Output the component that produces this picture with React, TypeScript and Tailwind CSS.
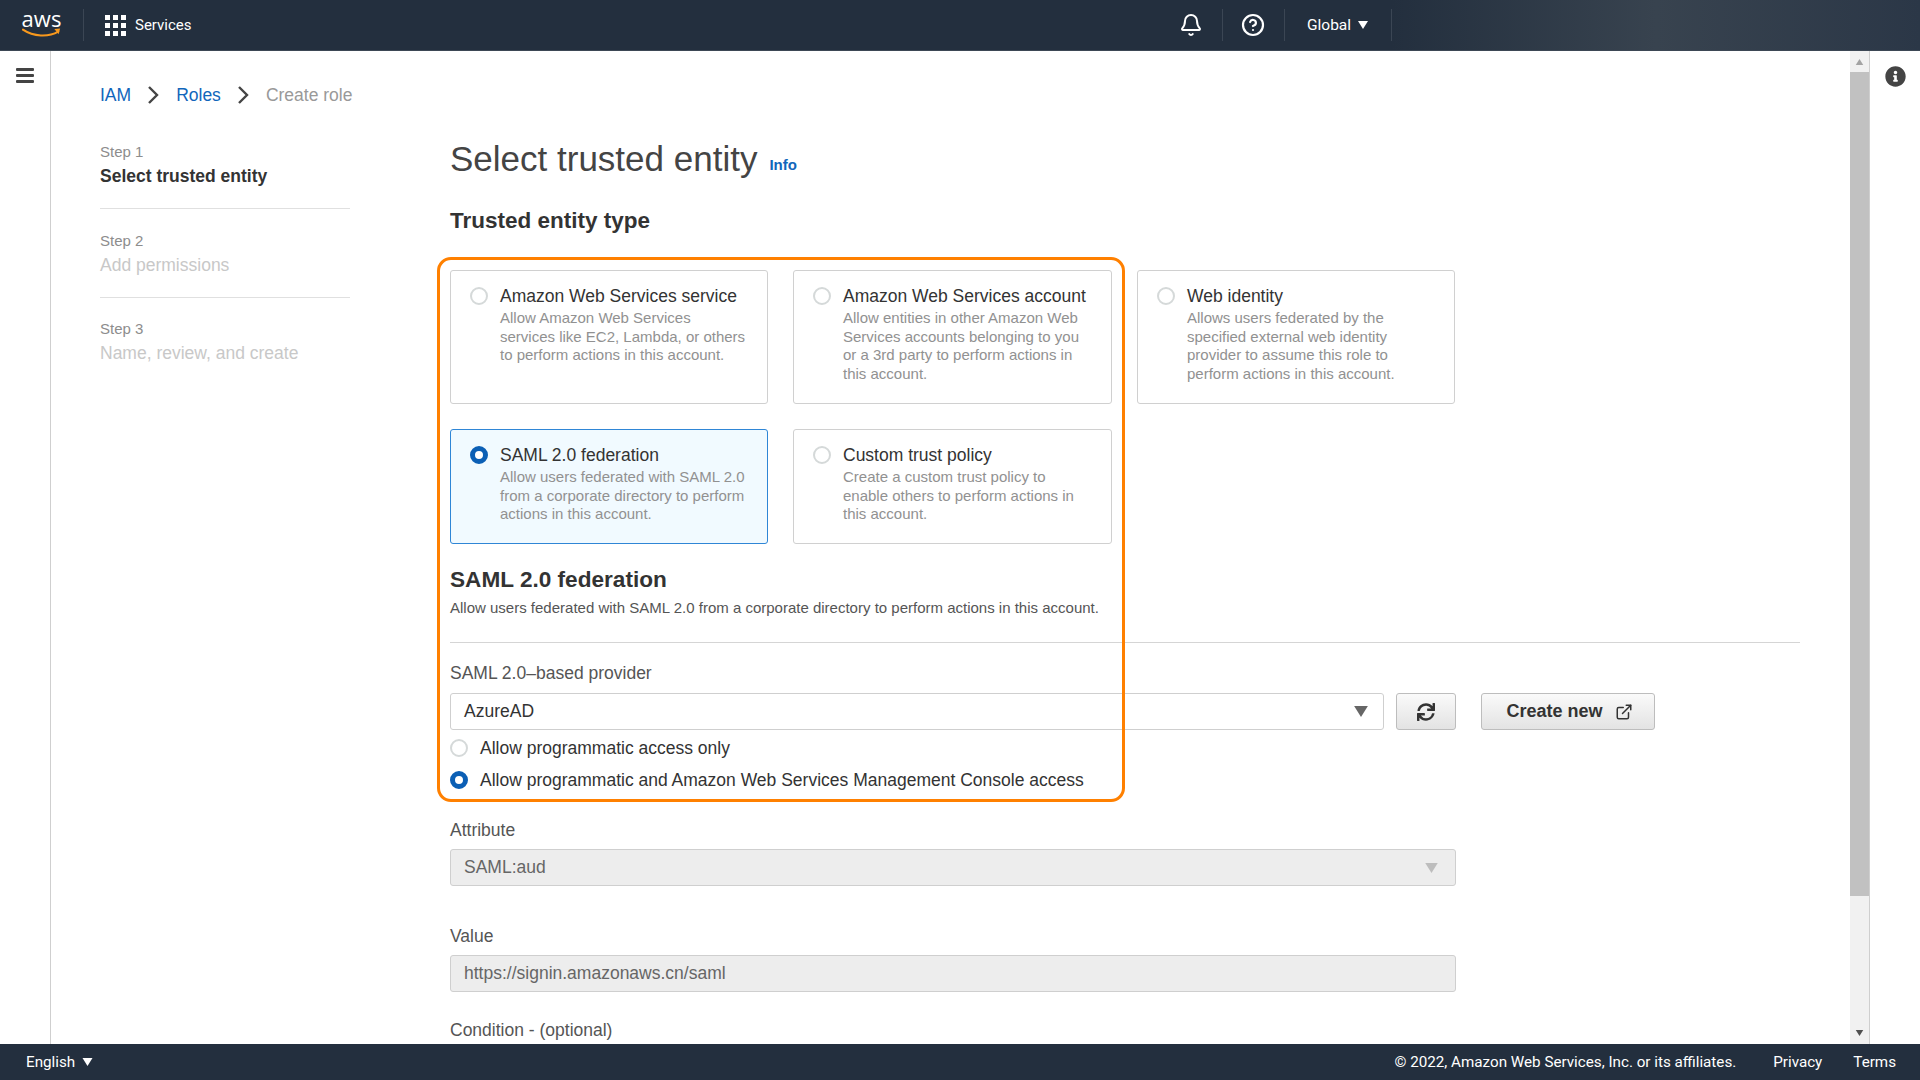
import { Bell, CircleHelp } from 'lucide-react';
import { FaInfoCircle, FaSync } from 'react-icons/fa';
import { FiExternalLink } from 'react-icons/fi';

const arial = 'font-["Liberation_Sans",Arial,sans-serif]';

const Caret = ({ className }: { className: string }) => (
  <svg className={className} viewBox="0 0 10 8" fill="currentColor">
    <path d="M0 0h10L5 8z" />
  </svg>
);

const Crumb = () => (
  <svg className="w-[12px] h-[20px] shrink-0 text-[#444]" viewBox="0 0 12 20" fill="none" stroke="currentColor" strokeWidth="2.4">
    <path d="M2 2l8 8-8 8" />
  </svg>
);

const Radio = ({ checked }: { checked?: boolean }) => (
  <span
    className={
      checked
        ? 'block w-[18px] h-[18px] shrink-0 rounded-full bg-white border-[5px] border-[#0b5fb5]'
        : 'block w-[18px] h-[18px] shrink-0 rounded-full bg-white border-2 border-[#d5d9d9]'
    }
  />
);

const steps = [
  { label: 'Step 1', title: 'Select trusted entity', active: true },
  { label: 'Step 2', title: 'Add permissions', active: false },
  { label: 'Step 3', title: 'Name, review, and create', active: false },
];

const cards = [
  {
    title: 'Amazon Web Services service',
    lines: ['Allow Amazon Web Services', 'services like EC2, Lambda, or others', 'to perform actions in this account.'],
  },
  {
    title: 'Amazon Web Services account',
    lines: ['Allow entities in other Amazon Web', 'Services accounts belonging to you', 'or a 3rd party to perform actions in', 'this account.'],
  },
  {
    title: 'Web identity',
    lines: ['Allows users federated by the', 'specified external web identity', 'provider to assume this role to', 'perform actions in this account.'],
  },
  {
    title: 'SAML 2.0 federation',
    lines: ['Allow users federated with SAML 2.0', 'from a corporate directory to perform', 'actions in this account.'],
    selected: true,
  },
  {
    title: 'Custom trust policy',
    lines: ['Create a custom trust policy to', 'enable others to perform actions in', 'this account.'],
  },
];

const Header = () => (
  <header className="h-[51px] shrink-0 flex items-stretch bg-[#232f3e] border-b border-[#3d4855] font-['Roboto',sans-serif] text-white">
    <div className="w-[83px] shrink-0 flex justify-center">
      <div className="relative w-[40px] h-[50px]">
        <span className="absolute left-0 top-[5px] w-full text-center font-['Open_Sans',sans-serif] text-[22px] leading-[26px]">aws</span>
        <svg className="absolute left-0 top-[27px] w-[40px] h-[12px]" viewBox="0 0 42 12" fill="none">
          <path d="M1 2.5c11 7.5 27 8 37 2" stroke="#f7981d" strokeWidth="2.2" strokeLinecap="round" />
          <path d="M34 1.8l6-.6-1.6 6z" fill="#f7981d" />
        </svg>
      </div>
    </div>
    <div className="w-px my-[9px] bg-[#3b4654]" />
    <div className="ml-[21px] flex items-center">
      <div className="grid grid-cols-3 gap-[3px] w-[21px]">
        {Array.from({ length: 9 }).map((_, i) => (
          <span key={i} className="h-[5px] w-[5px] bg-white" />
        ))}
      </div>
      <span className="ml-[9px] pt-[1px] text-[15px]">Services</span>
    </div>
    <div className="ml-[985px] w-[45px] pr-[16px] flex items-center justify-center">
      <Bell className="w-[24px] h-[24px] shrink-0" strokeWidth={2} />
    </div>
    <div className="w-px my-[9px] bg-[#3b4654]" />
    <div className="w-[61px] flex items-center justify-center">
      <CircleHelp className="w-[24px] h-[24px]" strokeWidth={2.2} />
    </div>
    <div className="w-px my-[9px] bg-[#3b4654]" />
    <div className="w-[106px] flex items-center justify-center gap-[7px]">
      <span className="pt-[1px] text-[15.5px]">Global</span>
      <Caret className="w-[10px] h-[8px]" />
    </div>
    <div className="w-px my-[9px] bg-[#3b4654]" />
    <div className="flex-1 bg-linear-to-r from-[#232f3e] via-[#38434f] to-[#2b3747]" />
  </header>
);

const Footer = () => (
  <footer className="h-[36px] shrink-0 flex items-center bg-[#232f3e] text-white font-['Roboto',sans-serif] text-[15.2px]">
    <span className="ml-[26px]">English</span>
    <Caret className="ml-[7px] w-[11px] h-[8px]" />
    <span className="ml-auto">© 2022, Amazon Web Services, Inc. or its affiliates.</span>
    <span className="ml-[37px]">Privacy</span>
    <span className="ml-[31px] mr-[24px]">Terms</span>
  </footer>
);

const Scrollbar = () => (
  <div className="w-[19px] shrink-0 flex flex-col bg-[#f1f1f1]">
    <div className="h-[21px] shrink-0 flex items-center justify-center">
      <Caret className="w-[9px] h-[6px] rotate-180 text-[#a3a3a3]" />
    </div>
    <div className="h-[824px] shrink-0 bg-[#c1c1c1]" />
    <div className="flex-1 flex items-end justify-center pb-[8px]">
      <Caret className="w-[9px] h-[6px] text-[#505050]" />
    </div>
  </div>
);

const Stepper = () => (
  <nav className="w-[250px] shrink-0 pt-[35px]">
    {steps.map((step, i) => (
      <div key={step.label} className={i === 0 ? 'h-[67px] border-b border-[#e0e0e0] mb-[22px]' : i === 1 ? 'h-[67px] border-b border-[#e0e0e0] mb-[21px]' : ''}>
        <div className="text-[15px] leading-[20px] text-[#8d8d8d]">{step.label}</div>
        <div className={step.active ? 'mt-[2px] text-[17.5px] leading-[24px] font-bold text-[#333]' : 'mt-[2px] text-[17.5px] leading-[24px] text-[#c8c8c8]'}>
          {step.title}
        </div>
      </div>
    ))}
  </nav>
);

const EntityCard = ({ title, lines, selected }: { title: string; lines: string[]; selected?: boolean }) => (
  <div className={selected ? 'flex gap-[12px] px-[19px] pt-[13px] rounded-[3px] border border-[#2f86d6] bg-[#f1faff]' : 'flex gap-[12px] px-[19px] pt-[13px] rounded-[3px] border border-[#d0d0d0] bg-white'}>
    <div className="pt-[3px]">
      <Radio checked={selected} />
    </div>
    <div>
      <div className="mb-[1px] text-[17.5px] leading-[24px] text-[#333] whitespace-nowrap">{title}</div>
      {lines.map(line => (
        <div key={line} className="text-[15px] leading-[18.6px] text-[#919191] whitespace-nowrap">{line}</div>
      ))}
    </div>
  </div>
);

const App = () => {
  return (
    <div className={`h-screen w-full flex flex-col overflow-hidden bg-white ${arial}`}>
      <Header />
      <div className="flex-1 min-h-0 flex">
        <div className="w-[51px] shrink-0 border-r border-[#cfcfcf] pt-[17px] pl-[16px]">
          <svg className="w-[18px] h-[15px] text-[#444]" viewBox="0 0 18 15" fill="currentColor">
            <rect width="18" height="3" rx="1" />
            <rect y="6" width="18" height="3" rx="1" />
            <rect y="12" width="18" height="3" rx="1" />
          </svg>
        </div>
        <div className="relative flex-1 min-w-0 overflow-hidden pl-[49px]">
          <div className="mt-[32px] h-[24px] flex items-center text-[17.5px] text-[#1166bb]">
            <span>IAM</span>
            <span className="ml-[16px] mr-[17px]"><Crumb /></span>
            <span>Roles</span>
            <span className="ml-[16px] mr-[17px]"><Crumb /></span>
            <span className="text-[#999]">Create role</span>
          </div>
          <div className="flex">
            <Stepper />
            <main className="ml-[100px] w-[1350px] shrink-0">
              <div className="mt-[30px] h-[44px] flex items-baseline">
                <h1 className="text-[35px] leading-[44px] text-[#444]">Select trusted entity</h1>
                <a className="relative -top-[1px] ml-[12px] text-[15px] font-bold text-[#1166bb]">Info</a>
              </div>
              <h2 className="mt-[25px] h-[30px] text-[22.5px] leading-[30px] font-bold text-[#333]">Trusted entity type</h2>
              <div className="mt-[34px] w-[1005px] grid grid-cols-[318px_319px_318px] gap-x-[25px] gap-y-[25px] grid-rows-[134px_115px]">
                {cards.map(card => (
                  <EntityCard key={card.title} {...card} />
                ))}
              </div>
              <h2 className="mt-[21px] h-[30px] text-[22.6px] leading-[30px] font-bold text-[#333]">SAML 2.0 federation</h2>
              <p className="mt-[3px] h-[20px] text-[15px] leading-[20px] text-[#555]">
                Allow users federated with SAML 2.0 from a corporate directory to perform actions in this account.
              </p>
              <div className="mt-[24px] h-px bg-[#d5d5d5]" />
              <div className="mt-[20px] h-[20px] text-[17.5px] leading-[20px] text-[#555]">SAML 2.0–based provider</div>
              <div className="mt-[10px] h-[37px] flex">
                <div className="w-[934px] flex items-center justify-between pl-[13px] pr-[13px] rounded-[3px] border border-[#cfcfcf] text-[17.5px] text-[#333]">
                  <span>AzureAD</span>
                  <Caret className="w-[18px] h-[11px] text-[#666]" />
                </div>
                <button className="ml-[12px] w-[60px] flex items-center justify-center rounded-[3px] border border-[#bdbdbd] bg-linear-to-b from-[#fafafa] to-[#e3e3e3] text-[#333]">
                  <FaSync className="w-[18px] h-[18px]" />
                </button>
                <button className="ml-[25px] w-[174px] flex items-center justify-center gap-[12px] pl-[3px] rounded-[3px] border border-[#bdbdbd] bg-linear-to-b from-[#fafafa] to-[#e3e3e3] text-[18px] font-bold text-[#333]">
                  <span>Create new</span>
                  <FiExternalLink className="w-[18px] h-[18px]" />
                </button>
              </div>
              <label className="mt-[5px] h-[26px] flex items-center gap-[12px] text-[17.5px] text-[#333]">
                <Radio />
                Allow programmatic access only
              </label>
              <label className="mt-[6px] h-[26px] flex items-center gap-[12px] text-[17.5px] text-[#333]">
                <Radio checked />
                Allow programmatic and Amazon Web Services Management Console access
              </label>
              <div className="mt-[27px] h-[20px] text-[17.5px] leading-[20px] text-[#555]">Attribute</div>
              <div className="mt-[9px] w-[1006px] h-[37px] flex items-center justify-between pl-[13px] pr-[15px] rounded-[3px] border border-[#cfcfcf] bg-[#ededed] text-[17.5px] text-[#666]">
                <span>SAML:aud</span>
                <Caret className="w-[17px] h-[10px] text-[#bdbdbd]" />
              </div>
              <div className="mt-[40px] h-[20px] text-[17.5px] leading-[20px] text-[#555]">Value</div>
              <div className="mt-[9px] w-[1006px] h-[37px] flex items-center pl-[13px] rounded-[3px] border border-[#cfcfcf] bg-[#ededed] text-[17.5px] text-[#666]">
                https://signin.amazonaws.cn/saml
              </div>
              <div className="mt-[28px] h-[20px] text-[17.5px] leading-[20px] text-[#555]">Condition - (optional)</div>
            </main>
          </div>
          {/* highlight drawn over the form */}
          <div className="absolute left-[386px] top-[206px] w-[688px] h-[545px] rounded-[14px] border-[3px] border-[#ff8000] pointer-events-none" />
        </div>
        <Scrollbar />
        <div className="w-[51px] shrink-0 border-l border-[#cfcfcf] pt-[15px] flex justify-center">
          <FaInfoCircle className="w-[21px] h-[21px] text-[#444]" />
        </div>
      </div>
      <Footer />
    </div>
  );
};

export default App;
